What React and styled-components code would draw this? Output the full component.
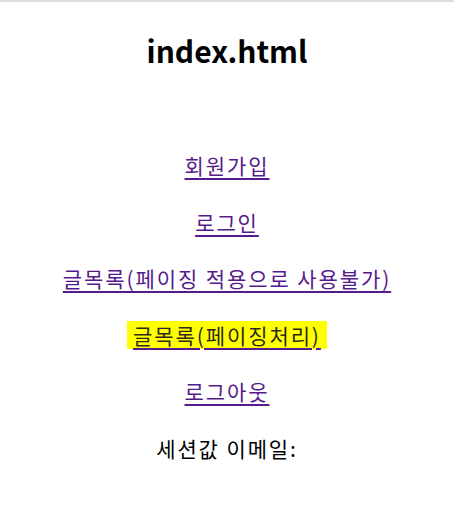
import React from 'react';
import styled, { createGlobalStyle } from 'styled-components';

const GlobalStyle = createGlobalStyle`
  html, body {
    margin: 0;
    padding: 0;
    background: #fff;
  }
  body {
    font-family: "Noto Sans CJK KR", "Noto Sans", sans-serif;
    border-top: 2px solid #dcdcdc;
  }
`;

const Page = styled.div`
  display: flex;
  flex-direction: column;
  align-items: center;
`;

const Title = styled.h1`
  margin: 26px 0 0;
  font-size: 30px;
  font-weight: 700;
  line-height: 44px;
  color: #000;
`;

const Menu = styled.nav`
  display: flex;
  flex-direction: column;
  align-items: center;
  gap: 28.5px;
  margin-top: 79px;
`;

const Link = styled.a`
  font-size: 21px;
  line-height: 28px;
  letter-spacing: 1.9px;
  color: ${p => (p.$highlight ? '#2e2a1c' : '#551a8b')};
  text-decoration: underline;
  text-decoration-color: #551a8b;
  text-underline-offset: 4px;
  background: ${p => (p.$highlight ? '#ffff00' : 'transparent')};
  padding: 0 ${p => (p.$highlight ? '6px' : '0')};
`;

const Session = styled.p`
  margin: 0;
  font-size: 21px;
  line-height: 28px;
  letter-spacing: 1.9px;
  color: #000;
`;

const links = [
  '회원가입',
  '로그인',
  '글목록(페이징 적용으로 사용불가)',
  '글목록(페이징처리)',
  '로그아웃',
];

export default function App() {
  return (
    <>
      <GlobalStyle />
      <Page>
        <Title>index.html</Title>
        <Menu>
          {links.map((t, i) => (
            <Link key={t} href="#" $highlight={i === 3}>
              {t}
            </Link>
          ))}
          <Session>세션값 이메일:</Session>
        </Menu>
      </Page>
    </>
  );
}
